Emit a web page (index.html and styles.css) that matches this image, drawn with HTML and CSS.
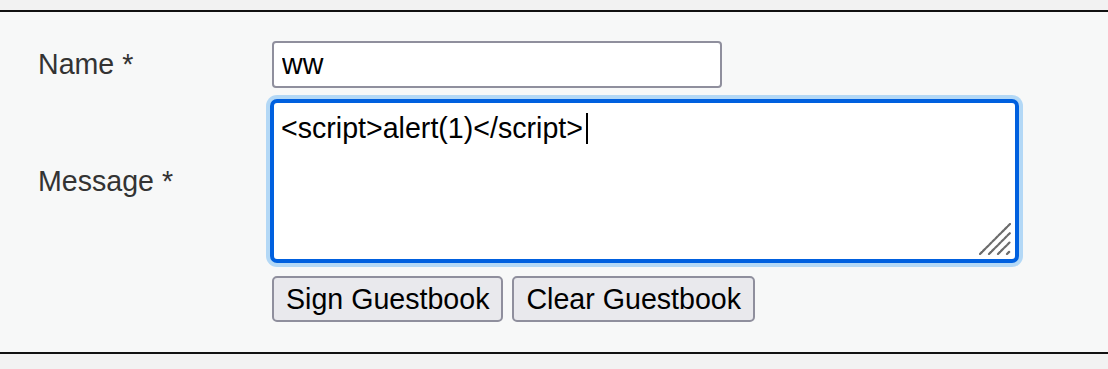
FILE: index.html
```html
<!DOCTYPE html>
<html lang="en">
<head>
<meta charset="utf-8">
<title>Guestbook</title>
<link rel="stylesheet" href="styles.css">
</head>
<body>
<div class="code-area">
  <form class="guestbook" onsubmit="return false">
    <label class="label" for="txtName">Name *</label>
    <div class="field">
      <input id="txtName" class="name-input" type="text" value="ww">
    </div>
    <label class="label">Message *</label>
    <div class="field">
      <div class="message" role="textbox" aria-multiline="true">&lt;script&gt;alert(1)&lt;/script&gt;<span class="caret"></span>
        <svg class="grip" width="32" height="32" viewBox="0 0 32 32" aria-hidden="true">
          <g stroke="#6b6b6b" stroke-width="2.2" stroke-linecap="round" stroke-dasharray="3 1.4">
            <line x1="1" y1="31" x2="31" y2="1"/>
            <line x1="10" y1="31" x2="31" y2="10"/>
            <line x1="19" y1="31" x2="31" y2="19"/>
            <line x1="28" y1="31" x2="31" y2="28"/>
          </g>
        </svg>
      </div>
    </div>
    <div></div>
    <div class="buttons">
      <button class="btn" type="button">Sign Guestbook</button>
      <button class="btn" type="button">Clear Guestbook</button>
    </div>
  </form>
</div>
</body>
</html>
```

FILE: styles.css
```css
html, body {
  margin: 0;
  padding: 0;
  background: #f2f2f2;
  font-family: "Liberation Sans", Arial, sans-serif;
}

body {
  padding-top: 10px;
}

.code-area {
  background: #f7f8f8;
  border-top: 2px solid #111;
  border-bottom: 2px solid #111;
  padding: 29px 0 30px 38px;
}

.guestbook {
  display: grid;
  grid-template-columns: 234px auto;
  justify-content: start;
  align-items: center;
  row-gap: 13px;
}

.label {
  font-size: 28.6px;
  color: #333;
  line-height: 33px;
}

.field {
  display: flex;
}

.name-input {
  box-sizing: border-box;
  width: 450px;
  height: 47px;
  margin: 0;
  padding: 0 8px;
  border: 2px solid #8f8f9d;
  border-radius: 4px;
  background: #fff;
  font-family: "Liberation Sans", Arial, sans-serif;
  font-size: 28.6px;
  color: #000;
  outline: none;
}

.message {
  position: relative;
  box-sizing: border-box;
  width: 745px;
  height: 160px;
  padding: 9px 7px;
  border: 2px solid #0060df;
  border-radius: 5px;
  background: #fff;
  box-shadow: 0 0 0 2px #0060df, 0 0 0 6px #b3d8f6;
  font-size: 28.6px;
  line-height: 33px;
  color: #000;
  white-space: pre;
}

.caret {
  display: inline-block;
  width: 2px;
  height: 31px;
  margin-left: 3px;
  background: #000;
  vertical-align: -6px;
}

.grip {
  position: absolute;
  right: 4px;
  bottom: 4px;
}

.buttons {
  display: flex;
  gap: 9px;
  margin-top: 2px;
}

.btn {
  box-sizing: border-box;
  height: 46px;
  padding: 0 12px;
  border: 2px solid #8f8f9d;
  border-radius: 5px;
  background: #e9e9ed;
  font-family: "Liberation Sans", Arial, sans-serif;
  font-size: 28.6px;
  color: #000;
}
```
